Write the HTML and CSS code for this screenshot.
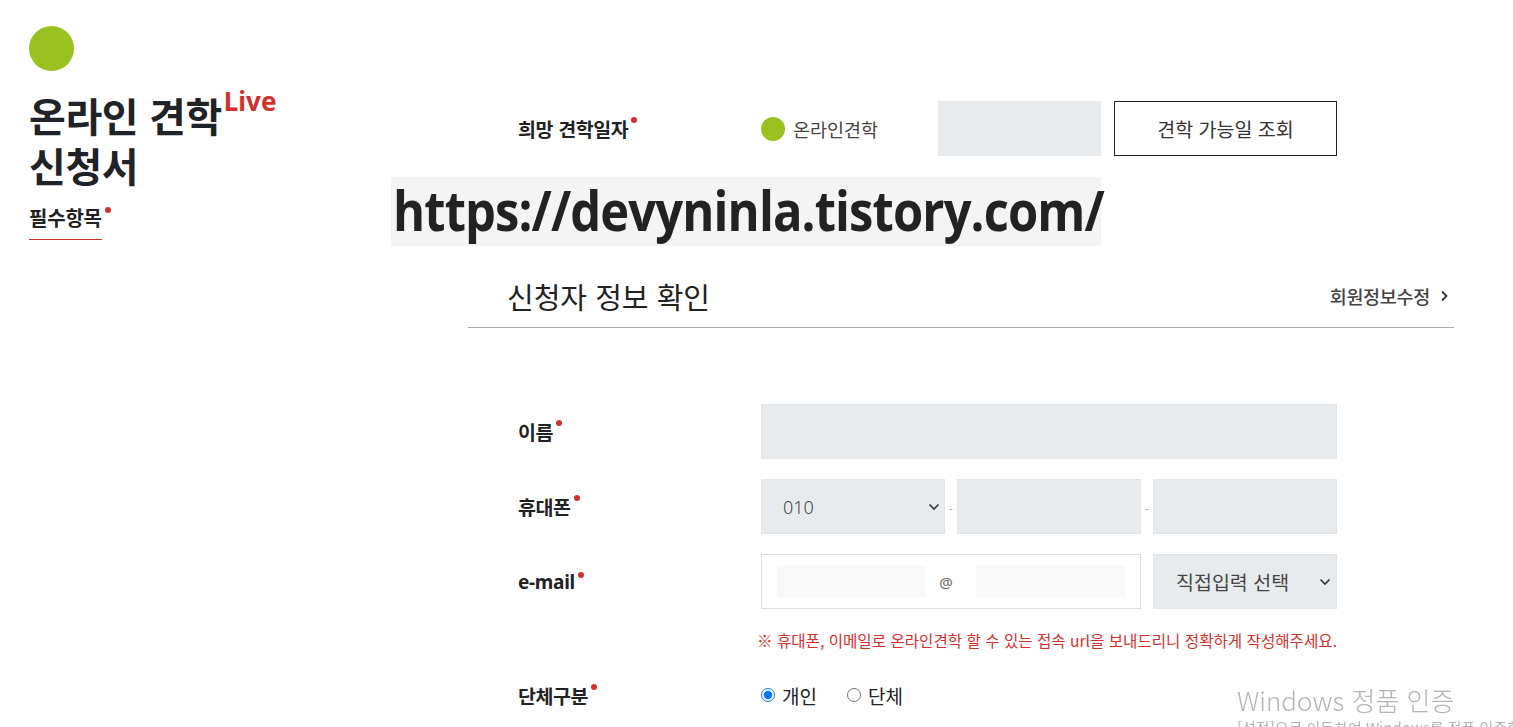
FILE: index.html
```html
<!DOCTYPE html>
<html lang="ko">
<head>
  <meta charset="UTF-8" />
  <title>온라인 견학 신청서</title>
  <meta name="viewport" content="width=device-width, initial-scale=1.0" />
  <link rel="stylesheet" href="styles.css">
</head>
<body>

  <div class="page">
    <aside class="side">
      <span class="logo-dot"></span>
      <h1 class="title">
        <span class="title-line">온라인 견학<sup>Live</sup></span>
        <span class="title-line">신청서</span>
      </h1>
      <p class="req-note"><span class="req-text">필수항목</span><i class="req"></i></p>
    </aside>

    <main class="form">
      <div class="row">
        <label class="lbl">희망 견학일자<i class="req"></i></label>
        <div class="ctrl">
          <span class="type"><span class="type-dot"></span>온라인견학</span>
          <span class="date-box"></span>
          <button class="btn-outline">견학 가능일 조회</button>
        </div>
      </div>

      <div class="sec-head">
        <h2>신청자 정보 확인</h2>
        <a class="edit-link" href="#">회원정보수정
          <svg width="12" height="12" viewBox="0 0 12 12"><path d="M4 1.5 8.5 6 4 10.5" fill="none" stroke="#333" stroke-width="1.8"/></svg>
        </a>
      </div>

      <div class="row row-name">
        <label class="lbl">이름<i class="req"></i></label>
        <div class="ctrl">
          <input class="field" type="text" />
        </div>
      </div>

      <div class="row">
        <label class="lbl">휴대폰<i class="req"></i></label>
        <div class="ctrl ctrl-phone">
          <div class="select">
            <select><option>010</option></select>
            <svg class="chev" width="12" height="8" viewBox="0 0 12 8"><path d="M1.5 1.5 6 6l4.5-4.5" fill="none" stroke="#333" stroke-width="1.6"/></svg>
          </div>
          <span class="dash">-</span>
          <input class="field" type="text" />
          <span class="dash">-</span>
          <input class="field" type="text" />
        </div>
      </div>

      <div class="row">
        <label class="lbl lbl-en">e-mail<i class="req"></i></label>
        <div class="ctrl">
          <div class="mail-box">
            <input class="mail-part" type="text" />
            <span class="at">@</span>
            <input class="mail-part" type="text" />
          </div>
          <div class="select select-mail">
            <select><option>직접입력 선택</option></select>
            <svg class="chev" width="12" height="8" viewBox="0 0 12 8"><path d="M1.5 1.5 6 6l4.5-4.5" fill="none" stroke="#333" stroke-width="1.6"/></svg>
          </div>
        </div>
      </div>

      <p class="notice">※ 휴대폰, 이메일로 온라인견학 할 수 있는 접속 url을 보내드리니 정확하게 작성해주세요.</p>

      <div class="row row-radio">
        <label class="lbl">단체구분<i class="req"></i></label>
        <div class="ctrl">
          <label class="radio"><input type="radio" name="group" checked />개인</label>
          <label class="radio"><input type="radio" name="group" />단체</label>
        </div>
      </div>
    </main>
  </div>

  <div class="stamp"><span>https://devyninla.tistory.com/</span></div>

  <div class="win-mark">
    <div class="win-title">Windows 정품 인증</div>
    <div class="win-sub">[설정]으로 이동하여 Windows를 정품 인증합니다.</div>
  </div>

</body>
</html>
```

FILE: styles.css
```css
body {
  margin: 0;
  font-family: "Noto Sans CJK KR", "Noto Sans", sans-serif;
  background: #fff;
  color: #222;
  overflow: hidden;
}

.page {
  display: flex;
  align-items: flex-start;
}

/* left title column */
.side {
  width: 439px;
  padding: 26px 0 0 29px;
}

.logo-dot {
  display: block;
  width: 45px;
  height: 45px;
  border-radius: 50%;
  background: #97c21f;
}

.title {
  margin: 19px 0 0;
  font-size: 40px;
  line-height: 50px;
  font-weight: 700;
  letter-spacing: -0.4px;
  color: #1f2226;
}

.title-line {
  display: block;
  height: 50px;
}

.title sup {
  font-family: "Noto Sans", sans-serif;
  font-size: 26px;
  color: #d0312d;
  letter-spacing: 0;
  vertical-align: top;
  position: relative;
  top: -2px;
  margin-left: 2px;
  line-height: 1;
}

.req-note {
  display: flex;
  align-items: flex-start;
  margin: 14px 0 0;
  font-size: 20px;
  line-height: 28px;
  font-weight: 700;
  letter-spacing: -0.2px;
}

.req-text {
  padding-bottom: 7px;
  border-bottom: 1px solid #d0312d;
}

.req {
  display: inline-block;
  width: 6px;
  height: 6px;
  border-radius: 50%;
  background: #d0312d;
  vertical-align: top;
  margin: 3px 0 0 3px;
}

/* main form */
.form {
  width: 986px;
  padding-top: 101px;
}

.row {
  display: flex;
  align-items: center;
  padding-left: 50px;
  height: 55px;
  margin-bottom: 20px;
}

.lbl {
  width: 243px;
  flex: none;
  font-size: 19.5px;
  font-weight: 700;
  letter-spacing: -0.4px;
  color: #222;
}

.lbl-en {
  font-family: "Noto Sans", sans-serif;
  font-size: 19px;
  letter-spacing: -0.3px;
}

.ctrl {
  display: flex;
  align-items: center;
  width: 576px;
  height: 100%;
}

.ctrl-phone {
  display: grid;
  grid-template-columns: 1fr 12.5px 1fr 12.5px 1fr;
  align-items: stretch;
}

.type {
  display: flex;
  align-items: center;
  width: 177px;
  font-size: 18.5px;
  letter-spacing: 0;
  color: #444;
}

.type-dot {
  width: 24px;
  height: 24px;
  border-radius: 50%;
  background: #97c21f;
  margin-right: 8px;
}

.date-box {
  width: 163px;
  height: 100%;
  background: #e8ebee;
}

.btn-outline {
  margin-left: 13px;
  width: 223px;
  height: 100%;
  background: #fff;
  border: 1px solid #222;
  font-family: inherit;
  font-size: 19.5px;
  letter-spacing: 0;
  color: #333;
  cursor: pointer;
}

.sec-head {
  display: flex;
  justify-content: space-between;
  align-items: center;
  margin: 120px 0 76px;
  padding: 0 4px 11px 39px;
  border-bottom: 1px solid #aaa;
}

.sec-head h2 {
  margin: 0;
  font-size: 29px;
  line-height: 40px;
  font-weight: 400;
  letter-spacing: 0;
  color: #222;
}

.edit-link {
  display: flex;
  align-items: center;
  gap: 8px;
  font-size: 18.5px;
  font-weight: 500;
  letter-spacing: -0.3px;
  color: #444;
  text-decoration: none;
}

.field {
  flex: 1;
  width: 100%;
  min-width: 0;
  height: 100%;
  padding: 0;
  box-sizing: border-box;
  background: #e8ebee;
  border: 1px solid #e2e5e8;
  outline: none;
}

.select {
  position: relative;
  min-width: 0;
  height: 100%;
}

.select select {
  appearance: none;
  width: 100%;
  height: 100%;
  padding: 0 0 0 21px;
  background: #e8ebee;
  border: 1px solid #e2e5e8;
  font-family: "Noto Sans", sans-serif;
  font-weight: 300;
  font-size: 18px;
  color: #444;
  outline: none;
}

.chev {
  position: absolute;
  right: 5px;
  top: 24px;
}

.dash {
  align-self: center;
  text-align: center;
  font-size: 12px;
  color: #aaa;
  padding-top: 4px;
}

.mail-box {
  display: flex;
  align-items: center;
  width: 380px;
  flex: none;
  height: 100%;
  box-sizing: border-box;
  margin-right: 12px;
  padding: 0 15px;
  border: 1px solid #dcdcdc;
}

.mail-part {
  width: 149px;
  height: 31px;
  box-sizing: border-box;
  background: #f8f8f8;
  border: 0;
  outline: none;
}

.at {
  flex: 1;
  text-align: center;
  font-family: "Noto Sans", sans-serif;
  font-size: 15px;
  color: #666;
  padding-right: 10px;
}

.select-mail {
  flex: none;
  width: 184px;
}

.select-mail select {
  font-family: "Noto Sans CJK KR", sans-serif;
  font-weight: 400;
  font-size: 19.5px;
  padding-left: 22px;
  letter-spacing: 0;
}

.select-mail .chev {
  right: 6px;
}

.notice {
  margin: 13px 0 0;
  width: 869px;
  text-align: right;
  font-size: 15.6px;
  line-height: 22px;
  letter-spacing: 0;
  color: #d0312d;
}

.row-radio {
  margin-top: 32px;
  height: 24px;
}

.radio {
  display: flex;
  align-items: center;
  margin-right: 30px;
  font-size: 19px;
  letter-spacing: 0;
  color: #222;
}

.radio input {
  margin: 0 7px 0 0;
  width: 14px;
  height: 14px;
}

/* overlays */
.stamp {
  position: absolute;
  left: 391px;
  top: 177px;
  width: 710px;
  height: 69px;
  background: #f4f4f4;
}

.stamp span {
  display: inline-block;
  margin-left: 2px;
  font-family: "Open Sans", sans-serif;
  font-weight: 700;
  font-size: 55px;
  line-height: 66px;
  letter-spacing: -1px;
  color: #222;
  white-space: nowrap;
  transform: scaleX(0.89);
  transform-origin: left center;
}

.win-mark {
  position: fixed;
  left: 1237px;
  top: 683px;
  color: #b4b4b4;
  white-space: nowrap;
}

.win-title {
  font-family: "Noto Sans CJK KR", sans-serif;
  font-size: 26px;
  line-height: 34px;
  font-weight: 300;
}

.win-sub {
  font-size: 15px;
  line-height: 22px;
}
```
